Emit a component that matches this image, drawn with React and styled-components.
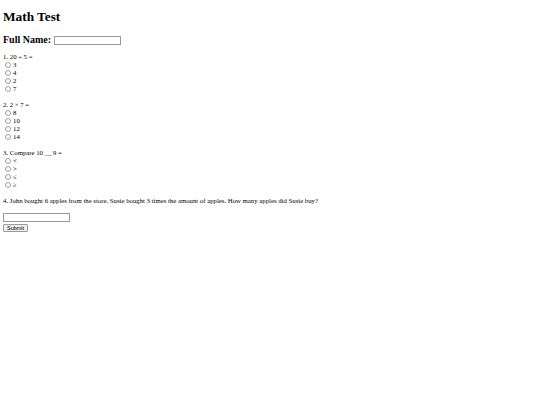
import React from "react";
import styled, { createGlobalStyle } from "styled-components";

const questions = [
  { id: "q1", text: "1. 20 ÷ 5 =", options: ["3", "4", "2", "7"] },
  { id: "q2", text: "2. 2 × 7 =", options: ["8", "10", "12", "14"] },
  { id: "q3", text: "3. Compare 10 __ 9 =", options: ["<", ">", "≤", "≥"] },
];

const App = () => {
  return (
    <>
      <GlobalStyle />
      <Page>
        <Title>Math Test</Title>
        <NameRow>
          Full Name:
          <TextInput type="text" />
        </NameRow>
        {questions.map((q) => (
          <Question key={q.id}>
            <Line>{q.text}</Line>
            {q.options.map((o) => (
              <Line key={o}>
                <Radio type="radio" name={q.id} />
                {o}
              </Line>
            ))}
          </Question>
        ))}
        <Question>
          <Line>
            4. John bought 6 apples from the store. Susie bought 3 times the
            amount of apples. How many apples did Susie buy?
          </Line>
        </Question>
        <Answer>
          <TextInput type="text" />
          <SubmitButton type="button">Submit</SubmitButton>
        </Answer>
      </Page>
    </>
  );
};

export default App;

const GlobalStyle = createGlobalStyle`
  html, body {
    margin: 0;
    background: #ffffff;
  }
`;

const Page = styled.div`
  padding: 0 3px;
  font-family: "Liberation Serif", "Times New Roman", serif;
  font-size: 6.75px;
  color: #000;
`;

const Title = styled.h1`
  font-size: 13.3px;
  line-height: 15px;
  font-weight: bold;
  margin: 0;
  padding-top: 9px;
`;

const NameRow = styled.h2`
  display: flex;
  align-items: center;
  gap: 3px;
  font-size: 10px;
  line-height: 12px;
  font-weight: bold;
  margin: 10px 0 0;
`;

const TextInput = styled.input`
  box-sizing: border-box;
  width: 67px;
  height: 9px;
  padding: 0 1px;
  margin: 0;
  border: 1px solid #9a9a9a;
  font-family: "Liberation Sans", Arial, sans-serif;
  font-size: 5.5px;
  display: block;
`;

const Question = styled.div`
  margin: 7px 0 8px;
`;

const Line = styled.div`
  display: flex;
  align-items: center;
  height: 8px;
  line-height: 8px;
`;

const Radio = styled.input`
  box-sizing: border-box;
  width: 6px;
  height: 6px;
  margin: 0 2px;
  appearance: none;
  border: 0.6px solid #a0a0a0;
  border-radius: 50%;
  background: #fff;
`;

const Answer = styled.div`
  display: flex;
  flex-direction: column;
  align-items: flex-start;
  gap: 2px;
`;

const SubmitButton = styled.button`
  box-sizing: border-box;
  height: 8px;
  padding: 0 3px;
  margin: 0;
  border: 0.6px solid #9a9a9a;
  border-radius: 1px;
  background: #efefef;
  font-family: "Liberation Sans", Arial, sans-serif;
  font-size: 5.5px;
  line-height: 6px;
  color: #000;
`;
